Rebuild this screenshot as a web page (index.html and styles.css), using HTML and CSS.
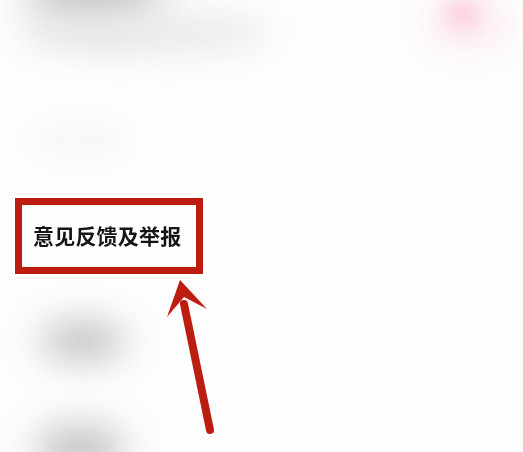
FILE: index.html
```html
<!DOCTYPE html>
<html lang="zh">
<head>
<meta charset="utf-8">
<title>意见反馈及举报</title>
<link rel="stylesheet" href="styles.css">
</head>
<body>
<main class="screen">
  <div class="blob blob-title"></div>
  <div class="blob blob-sub"></div>
  <div class="blob blob-pink-wide"></div>
  <div class="blob blob-pink"></div>
  <div class="blob blob-row1"></div>
  <div class="blob blob-row3"></div>
  <div class="blob blob-row4"></div>
  <div class="highlight"><span class="label">意见反馈及举报</span></div>
  <svg class="arrow" width="523" height="452" viewBox="0 0 523 452" aria-hidden="true">
    <path class="arrow-shaft" d="M210 430 L184 304"/>
    <path class="arrow-head" d="M180 280 L207 309 L184 297 L167 317 Z"/>
  </svg>
</main>
</body>
</html>
```
FILE: styles.css
```css
html, body {
  margin: 0;
  padding: 0;
  background: #fdfdfd;
}

.screen {
  position: relative;
  width: 523px;
  height: 452px;
  overflow: hidden;
  padding: 198px 0 0 15px;
  box-sizing: border-box;
  background: #fdfdfd;
}

.highlight {
  position: relative;
  box-sizing: border-box;
  width: 188px;
  height: 76px;
  border: 7px solid #bd1c10;
  background: #fefefe;
  display: flex;
  align-items: center;
  padding-left: 11px;
  padding-bottom: 2px;
}

.label {
  font-family: "Noto Sans CJK SC", "Liberation Sans", sans-serif;
  font-size: 21px;
  font-weight: 700;
  letter-spacing: 0.2px;
  line-height: 26px;
  color: #151515;
  white-space: nowrap;
  filter: blur(0.4px);
}

.arrow {
  position: absolute;
  left: 0;
  top: 0;
}

.arrow-shaft {
  fill: none;
  stroke: #bd1c10;
  stroke-width: 8px;
  stroke-linecap: round;
}

.arrow-head {
  fill: #bd1c10;
}

.blob {
  position: absolute;
  border-radius: 50%;
}

.blob-title {
  left: 28px;
  top: -35px;
  width: 135px;
  height: 62px;
  background: #c4c4c4;
  filter: blur(20px);
}

.blob-sub {
  left: 20px;
  top: 14px;
  width: 250px;
  height: 38px;
  background: #e9e9e9;
  filter: blur(16px);
}

.blob-pink {
  left: 447px;
  top: 0;
  width: 32px;
  height: 28px;
  background: #fbcbdb;
  filter: blur(10px);
}

.blob-pink-wide {
  left: 425px;
  top: -8px;
  width: 85px;
  height: 60px;
  background: #fdeef3;
  filter: blur(14px);
}

.blob-row1 {
  left: 32px;
  top: 120px;
  width: 95px;
  height: 40px;
  background: #f8f8f8;
  filter: blur(10px);
}

.blob-row3 {
  left: 40px;
  top: 322px;
  width: 85px;
  height: 38px;
  background: #bfbfbf;
  filter: blur(18px);
}

.blob-row4 {
  left: 35px;
  top: 424px;
  width: 90px;
  height: 54px;
  background: #c6c6c6;
  filter: blur(18px);
}
```
